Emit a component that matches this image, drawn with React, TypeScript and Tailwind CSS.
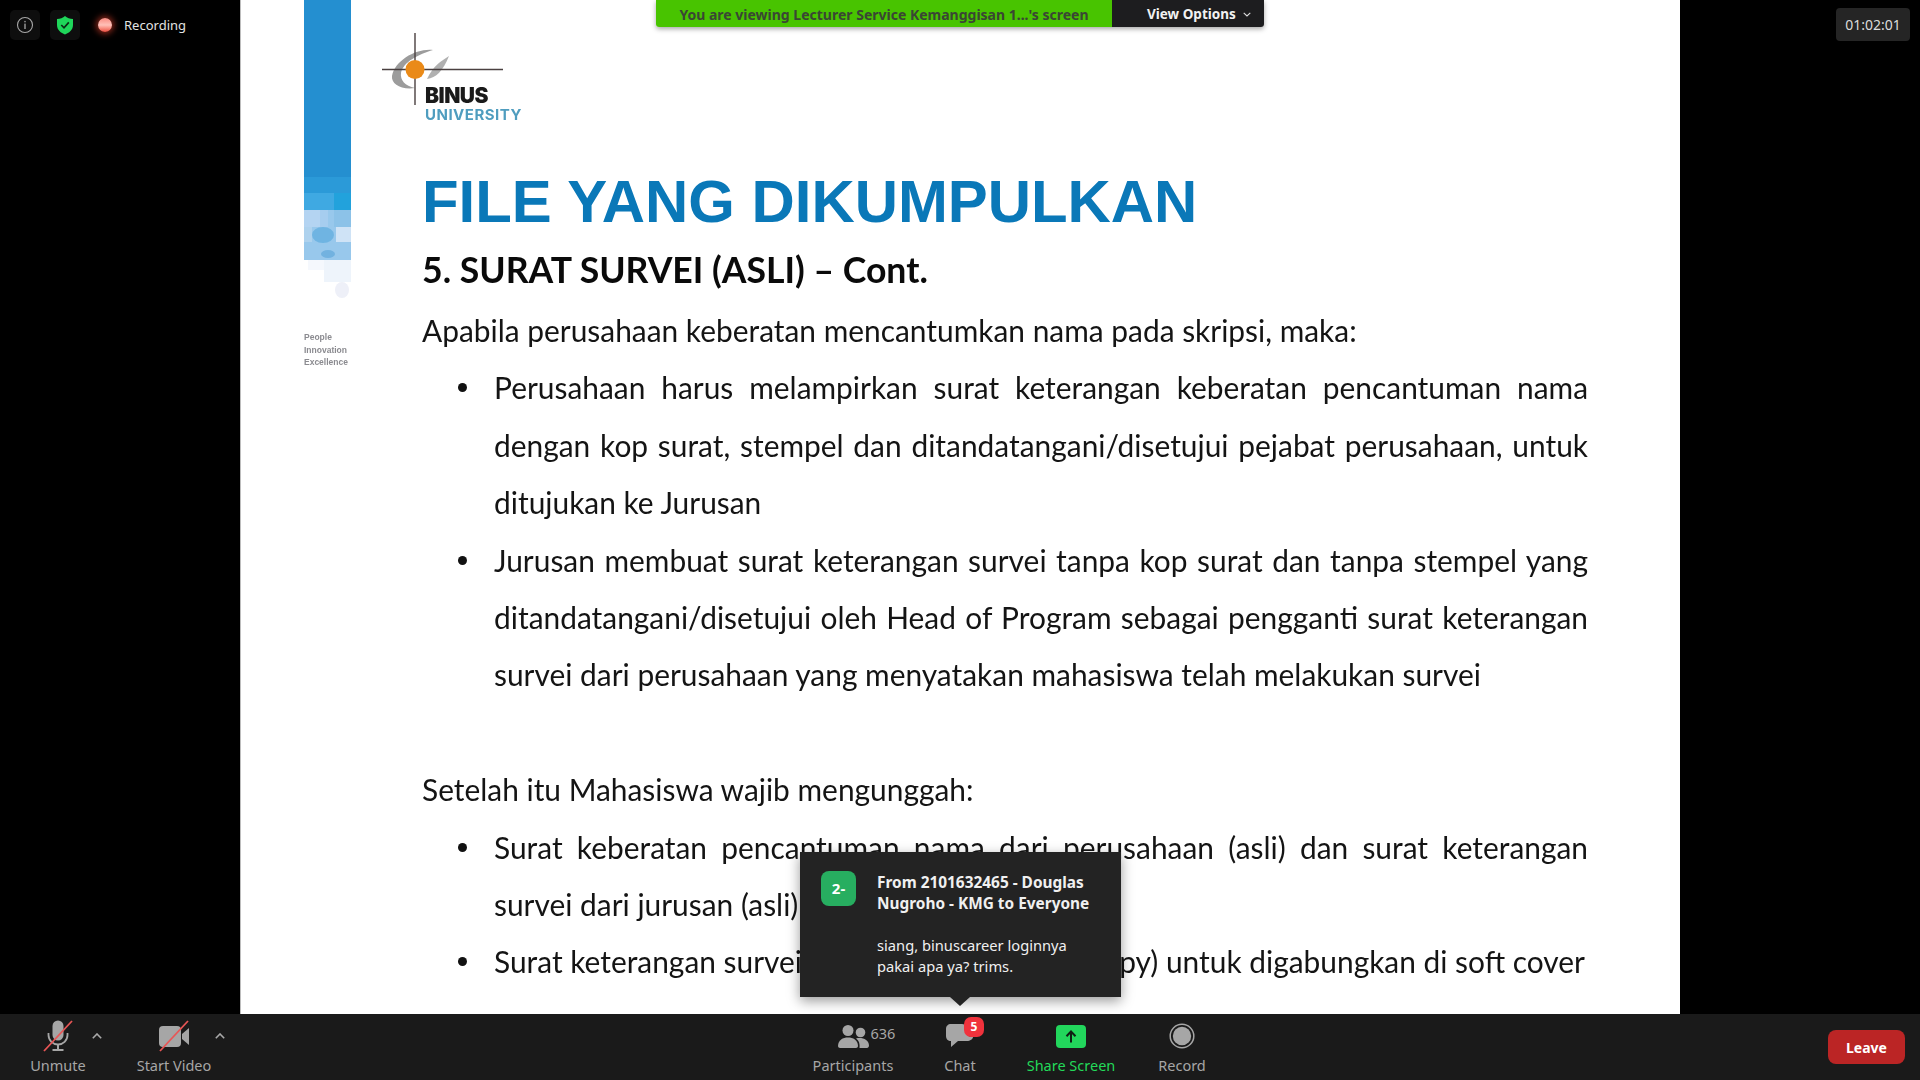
import React from "react";

const sans = "font-['Liberation_Sans',Arial,sans-serif]";
const ui = "font-['Noto_Sans','Open_Sans',sans-serif]";
const body = "font-['Lato','Open_Sans',sans-serif]";

function Line({ children, last = false }: { children: React.ReactNode; last?: boolean }) {
  return (
    <div className={`h-[57.4px] leading-[57.4px] ${last ? "whitespace-nowrap" : "[text-align:justify] [text-align-last:justify]"}`}>
      {children}
    </div>
  );
}

function Dot() {
  return <span className="absolute left-[36px] top-[24px] w-[9px] h-[9px] rounded-full bg-[#111]" />;
}

function Bullet({ lines }: { lines: string[] }) {
  return (
    <div className="relative pl-[72px]">
      <Dot />
      {lines.map((l, i) => (
        <Line key={i} last={i === lines.length - 1}>{l}</Line>
      ))}
    </div>
  );
}

function Logo() {
  return (
    <div className="relative h-[166px] w-[160px] -ml-[41px]">
      <svg width="145" height="90" viewBox="0 0 145 90" className="absolute left-0 top-[30px]">
        <path d="M52 20C36 18 14 30 11 46C10 54 20 60 34 58C24 56 19 50 20 43C22 32 38 24 52 20Z" fill="#9c9c9c" />
        <path d="M68 26C60 31 52 36 46 49C55 48 62 41 68 26Z" fill="#b0b0b0" />
        <path d="M1 39.5H122M34 3V75" stroke="#4a4040" strokeWidth="1.4" fill="none" />
        <circle cx="34" cy="39.5" r="9.5" fill="#ea8a18" />
      </svg>
      <div className="absolute left-[44px] top-[85px] font-['Inter',sans-serif] font-black text-[21px] leading-[22px] tracking-[-0.5px] text-[#1a1a1a]">BINUS</div>
      <div className="absolute left-[44px] top-[107px] font-['Inter',sans-serif] font-bold text-[15px] leading-[16px] tracking-[0.5px] text-[#4f9dbf]">UNIVERSITY</div>
    </div>
  );
}

function Stripe() {
  return (
    <div className="ml-[63px] w-[47px] shrink-0 flex flex-col">
      <div className="h-[177px] bg-[#248fd0]" />
      <div className="h-[16px] bg-[#2b9ad8]" />
      <svg width="47" height="107" viewBox="0 0 47 107" className="block">
        <rect x="0" y="0" width="30" height="17" fill="#3fa9e2" />
        <rect x="30" y="0" width="17" height="17" fill="#22a2dc" />
        <rect x="0" y="17" width="47" height="50" fill="#98c8ec" />
        <rect x="0" y="17" width="16" height="17" fill="#b4d4f2" />
        <rect x="16" y="17" width="8" height="17" fill="#a6cdef" />
        <rect x="30" y="17" width="17" height="17" fill="#8cc2e8" />
        <rect x="32" y="34" width="15" height="15" fill="#cfe3f6" />
        <rect x="0" y="34" width="8" height="15" fill="#aed2ee" />
        <ellipse cx="19" cy="42" rx="11" ry="8" fill="#6fb4e2" />
        <ellipse cx="24" cy="61" rx="7" ry="4" fill="#72b2e0" />
        <rect x="0" y="67" width="47" height="40" fill="#ffffff" />
        <rect x="4" y="67" width="22" height="10" fill="#f5f8fd" />
        <rect x="20" y="67" width="27" height="22" fill="#eef4fb" />
        <ellipse cx="38" cy="97" rx="7" ry="8" fill="#eef0f8" />
      </svg>
      <div className={`mt-[31px] ${sans} font-bold text-[8.5px] leading-[12.5px] text-[#8b8b90]`}>
        People<br />Innovation<br />Excellence
      </div>
    </div>
  );
}

function Slide() {
  return (
    <div className="w-[1440px] shrink-0 h-full bg-white overflow-hidden border-l border-[#bdbdbd]">
      <div className="flex blur-[0.45px]">
        <Stripe />
        <div className="ml-[71px] w-[1166px] shrink-0">
          <Logo />
          <div className={`${sans} font-bold text-[59.9px] leading-[70px] h-[70px] pt-[1px] text-[#0a78b8] whitespace-nowrap`}>FILE YANG DIKUMPULKAN</div>
          <div className={`${body} font-bold text-[35.6px] leading-[64px] h-[64px] pt-[2px] text-[#0a0a0a] whitespace-nowrap`}>5. SURAT SURVEI (ASLI) – Cont.</div>
          <div className={`${body} text-[29.9px] text-[#141414] pt-[2px]`}>
            <Line last>Apabila perusahaan keberatan mencantumkan nama pada skripsi, maka:</Line>
            <Bullet lines={[
              "Perusahaan harus melampirkan surat keterangan keberatan pencantuman nama",
              "dengan kop surat, stempel dan ditandatangani/disetujui pejabat perusahaan, untuk",
              "ditujukan ke Jurusan",
            ]} />
            <Bullet lines={[
              "Jurusan membuat surat keterangan survei tanpa kop surat dan tanpa stempel yang",
              "ditandatangani/disetujui oleh Head of Program sebagai pengganti surat keterangan",
              "survei dari perusahaan yang menyatakan mahasiswa telah melakukan survei",
            ]} />
            <div className="h-[57.4px]" />
            <Line last>Setelah itu Mahasiswa wajib mengunggah:</Line>
            <Bullet lines={[
              "Surat keberatan pencantuman nama dari perusahaan (asli) dan surat keterangan",
              "survei dari jurusan (asli)",
            ]} />
            <div className="relative pl-[72px] pr-[3px]">
              <Dot />
              <div className="flex justify-between h-[57.4px] leading-[57.4px] whitespace-nowrap">
                <span>Surat keterangan survei dari</span>
                <span>(softcopy) untuk digabungkan di soft cover</span>
              </div>
            </div>
          </div>
        </div>
      </div>
    </div>
  );
}

function TopLeft() {
  return (
    <div className="w-[240px] shrink-0 flex items-start pt-[10px] pl-[10px]">
      <div className="w-[30px] h-[30px] rounded-[5px] bg-[#0e0e0e] flex items-center justify-center">
        <svg width="18" height="18" viewBox="0 0 18 18" fill="none">
          <circle cx="9" cy="9" r="7.5" stroke="#a8a8a8" strokeWidth="1.1" />
          <rect x="8.4" y="7.6" width="1.2" height="5.4" fill="#b5b5b5" />
          <rect x="8.4" y="4.9" width="1.2" height="1.4" fill="#b5b5b5" />
        </svg>
      </div>
      <div className="ml-[10px] w-[30px] h-[30px] rounded-[5px] bg-[#0e0e0e] flex items-center justify-center">
        <svg width="18" height="20" viewBox="0 0 18 20">
          <path d="M9 1C11 3 14 3.8 17 4V10C17 15 13 18 9 19.5C5 18 1 15 1 10V4C4 3.8 7 3 9 1Z" fill="#1fd65a" />
          <path d="M5.3 10L8 12.8L12.8 7.4" stroke="#0b2a14" strokeWidth="1.7" fill="none" />
        </svg>
      </div>
      <div className="ml-[18px] mt-[8px] w-[14px] h-[14px] rounded-full bg-gradient-to-b from-[#f88a80] via-[#ffc0b8] to-[#e8473c] shadow-[0_0_6px_2px_rgba(214,60,40,0.65)]" />
      <div className={`ml-[12px] mt-[3px] ${ui} text-[13px] leading-[24px] text-[#e2e2e2]`}>Recording</div>
    </div>
  );
}

function Caret({ left }: { left: number }) {
  return (
    <svg width="10" height="6" viewBox="0 0 10 6" fill="none" className="absolute top-[19px]" style={{ left }}>
      <path d="M0.8 5.2L5 1L9.2 5.2" stroke="#a9a9a9" strokeWidth="1.6" />
    </svg>
  );
}

function ToolBtn({ width, icon, label, green }: { width: number; icon: React.ReactNode; label: string; green?: boolean }) {
  return (
    <div className="flex flex-col items-center shrink-0 h-full" style={{ width }}>
      <div className="h-[41px] flex items-center justify-center pt-[3px]">{icon}</div>
      <div className={`${ui} text-[14.5px] leading-[21px] whitespace-nowrap ${green ? "text-[#23d959]" : "text-[#a6a6a6]"}`}>{label}</div>
    </div>
  );
}

function Toolbar() {
  return (
    <div className="h-[66px] shrink-0 bg-[#1a1a1a] flex relative">
      <div className="relative w-[800px] shrink-0 flex">
        <ToolBtn width={116} label="Unmute" icon={
          <svg width="30" height="32" viewBox="0 0 30 32" fill="none">
            <rect x="9.5" y="0.5" width="11" height="20" rx="5.5" fill="#a6a6a6" />
            <path d="M5.5 13V15C5.5 20.5 10 24.5 15 24.5C20 24.5 24.5 20.5 24.5 15V13" stroke="#a6a6a6" strokeWidth="1.8" />
            <path d="M15 24.5V29.5M9.5 30H20.5" stroke="#a6a6a6" strokeWidth="2" />
            <path d="M1 31L29 1" stroke="#e85555" strokeWidth="1.8" />
          </svg>
        } />
        <ToolBtn width={116} label="Start Video" icon={
          <svg width="32" height="32" viewBox="0 0 32 32" fill="none">
            <rect x="1" y="6" width="22" height="21" rx="4" fill="#a6a6a6" />
            <path d="M24 14L31 8V25L24 19Z" fill="#a6a6a6" />
            <path d="M2 31L30 1" stroke="#e85555" strokeWidth="1.8" />
          </svg>
        } />
        <Caret left={92} />
        <Caret left={215} />
      </div>
      <ToolBtn width={106} label="Participants" icon={
        <div className="relative">
          <svg width="31" height="23" viewBox="0 0 31 23" fill="#a6a6a6" className="block">
            <circle cx="10" cy="5.5" r="5.5" />
            <circle cx="22.5" cy="7.5" r="4.8" />
            <path d="M0 21C0 15 5 12.5 10 12.5C15 12.5 20 15 20 21C20 22 19 23 18 23H2C1 23 0 22 0 21Z" />
            <path d="M18 13.5C24 12 31 14.5 31 20.5C31 22 30 23 29 23H21.5C22 18.5 21 15.5 18 13.5Z" />
          </svg>
          <span className={`absolute left-[33px] -top-[2px] ${ui} text-[14.5px] leading-[20px] text-[#a6a6a6]`}>636</span>
        </div>
      } />
      <ToolBtn width={108} label="Chat" icon={
        <div className="relative w-[28px] h-[24px]">
          <svg width="27" height="24" viewBox="0 0 27 24" fill="#a6a6a6">
            <path d="M5 0H16C18 0 20 1 20 4V7C20 10 22 13 27 13C27 15 24 17 21 17H12L5 23V17C2 17 0 15 0 12V5C0 2 2 0 5 0Z" />
          </svg>
          <div className={`absolute -top-[7px] left-[18px] w-[20px] h-[20px] rounded-[7px] bg-[#f0323c] flex items-center justify-center ${ui} font-bold text-[12px] leading-[20px] text-white`}>5</div>
        </div>
      } />
      <ToolBtn width={114} green label="Share Screen" icon={
        <div className="w-[30px] h-[23px] rounded-[4px] bg-[#22d65c] flex items-center justify-center">
          <svg width="12" height="13" viewBox="0 0 12 13" fill="none">
            <path d="M6 12.5V2M1.5 6.2L6 1.5L10.5 6.2" stroke="#0f1f14" strokeWidth="2" />
          </svg>
        </div>
      } />
      <ToolBtn width={108} label="Record" icon={
        <svg width="26" height="26" viewBox="0 0 26 26">
          <circle cx="13" cy="13" r="11.8" fill="none" stroke="#a6a6a6" strokeWidth="1.5" />
          <circle cx="13" cy="13" r="9.2" fill="#a6a6a6" />
        </svg>
      } />
      <div className="flex-1 flex justify-end items-start pt-[16px] pr-[15px]">
        <div className={`w-[77px] h-[34px] rounded-[8px] bg-[#bb2525] flex items-center justify-center ${ui} font-bold text-[14px] text-white`}>Leave</div>
      </div>
    </div>
  );
}

export default function App() {
  return (
    <div className="w-[1920px] h-[1080px] bg-black flex flex-col overflow-hidden relative">
      <div className="h-[1014px] flex relative shrink-0">
        <TopLeft />
        <Slide />
        <div className="w-[240px] shrink-0 bg-black" />

        <div className={`absolute left-[656px] top-0 w-[608px] h-[27px] flex rounded-b-[3px] overflow-hidden shadow-[0_2px_5px_rgba(0,0,0,0.35)] ${ui} text-[14px] font-bold`}>
          <div className="w-[456px] bg-[#48c400] text-[#3a4634] flex items-center justify-center whitespace-nowrap pt-[1px]">You are viewing Lecturer Service Kemanggisan 1...'s screen</div>
          <div className="flex-1 bg-[#1d1d1f] text-[#f2f2f2] flex items-center pl-[35px] whitespace-nowrap pt-[1px] text-[13.5px]">
            View Options
            <svg width="8" height="5" viewBox="0 0 8 5" fill="none" className="ml-[7px]"><path d="M0.7 0.8L4 4L7.3 0.8" stroke="#ddd" strokeWidth="1.1" /></svg>
          </div>
        </div>

        <div className={`absolute left-[1836px] top-[8px] w-[74px] h-[33px] rounded-[4px] bg-[#252525] flex items-center justify-center ${ui} text-[14px] text-[#dcdcdc]`}>01:02:01</div>

        <div className="absolute left-[800px] top-[852px] w-[321px] h-[145px] bg-[#232323] shadow-[0_4px_12px_rgba(0,0,0,0.4)] flex pt-[19px] pl-[21px]">
          <div className={`w-[35px] h-[35px] rounded-[8px] bg-[#27ae60] flex items-center justify-center shrink-0 ${ui} font-bold text-[15px] text-white`}>2-</div>
          <div className={`ml-[21px] ${ui} text-[14.7px] leading-[21px] text-[#f0f0f0] pt-[1px]`}>
            <div className="font-bold text-[15.4px] whitespace-nowrap">From 2101632465 - Douglas<br />Nugroho - KMG to Everyone</div>
            <div className="mt-[21px] whitespace-nowrap">siang, binuscareer loginnya<br />pakai apa ya? trims.</div>
          </div>
          <div className="absolute left-[150px] top-[145px] w-0 h-0 border-x-[10px] border-x-transparent border-t-[9px] border-t-[#232323]" />
        </div>
      </div>
      <Toolbar />
    </div>
  );
}
